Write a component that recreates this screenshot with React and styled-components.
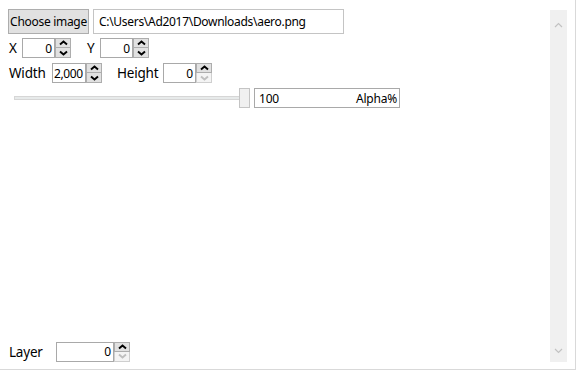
import React from "react";
import styled, { createGlobalStyle } from "styled-components";

const Global = createGlobalStyle`
  html, body { margin: 0; padding: 0; background: #fff; }
  body { font-family: "Noto Sans", "Open Sans", sans-serif; color: #000; }
`;

const Frame = styled.div`
  width: 575px;
  height: 369px;
  border-right: 1px solid #d9d9d9;
  border-bottom: 1px solid #d9d9d9;
  display: flex;
  box-sizing: content-box;
`;

const Content = styled.div`
  flex: 1;
  display: flex;
  flex-direction: column;
  padding: 9px 0 8px 8px;
`;

const Row = styled.div`
  display: flex;
  align-items: center;
  height: ${(p) => p.h || 20}px;
  margin-top: ${(p) => p.mt || 0}px;
`;

const Button = styled.div`
  box-sizing: border-box;
  width: 81px;
  height: 25px;
  background: #e1e1e1;
  border: 1px solid #adadad;
  font-size: 12px;
  display: flex;
  align-items: center;
  justify-content: center;
  letter-spacing: -0.3px;
`;

const PathBox = styled.div`
  box-sizing: border-box;
  width: 251px;
  height: 25px;
  margin-left: 4px;
  border: 1px solid #c4c4c4;
  font-size: 12px;
  display: flex;
  align-items: center;
  padding-left: 5px;
  letter-spacing: -0.3px;
`;

const Label = styled.span`
  font-size: 13.5px;
  width: ${(p) => p.w}px;
  padding-left: 1px;
  box-sizing: border-box;
  letter-spacing: -0.2px;
`;

const NumWrap = styled.div`
  display: flex;
  height: 20px;
`;

const NumBox = styled.div`
  box-sizing: border-box;
  width: ${(p) => p.w}px;
  height: 20px;
  border: 1px solid #a9a9a9;
  font-size: 12px;
  display: flex;
  align-items: center;
  justify-content: flex-end;
  padding-right: 2px;
  overflow: hidden;
  white-space: nowrap;
  ${(p) => p.left && "justify-content: flex-start; padding-left: 1px; letter-spacing: -0.4px;"}
`;

const Spin = styled.div`
  display: flex;
  flex-direction: column;
  width: 16px;
  height: 20px;
`;

const SpinBtn = styled.div`
  box-sizing: border-box;
  height: 10px;
  display: flex;
  align-items: center;
  justify-content: center;
  background: ${(p) => (p.disabled ? "#f4f4f4" : "#e1e1e1")};
  border: 1px solid ${(p) => (p.disabled ? "#cfcfcf" : "#adadad")};
  ${(p) => p.bottom && "border-top: none;"}
`;

const Arrow = ({ down, disabled }) => (
  <svg width="9" height="6" viewBox="0 0 9 6">
    <polyline
      points={down ? "1,1.5 4.5,4.5 8,1.5" : "1,4.5 4.5,1.5 8,4.5"}
      fill="none"
      stroke={disabled ? "#bfbfbf" : "#000"}
      strokeWidth="1.9"
    />
  </svg>
);

const Spinner = ({ value, w, downDisabled, left }) => (
  <NumWrap>
    <NumBox w={w} left={left}>{value}</NumBox>
    <Spin>
      <SpinBtn><Arrow /></SpinBtn>
      <SpinBtn bottom disabled={downDisabled}>
        <Arrow down disabled={downDisabled} />
      </SpinBtn>
    </Spin>
  </NumWrap>
);

const Gap = styled.div`
  width: ${(p) => p.w}px;
  flex-shrink: 0;
`;

const Slider = styled.div`
  position: relative;
  width: 236px;
  height: 20px;
  margin-left: 6px;
  display: flex;
  align-items: center;
`;

const Track = styled.div`
  width: 100%;
  height: 4px;
  box-sizing: border-box;
  background: #e7eaea;
  border: 1px solid #d6d6d6;
`;

const Thumb = styled.div`
  position: absolute;
  right: 0;
  top: 0;
  width: 11px;
  height: 20px;
  box-sizing: border-box;
  background: #f0f0f0;
  border: 1px solid #c4c4c4;
`;

const AlphaBox = styled.div`
  box-sizing: border-box;
  width: 146px;
  height: 20px;
  margin-left: 4px;
  border: 1px solid #a9a9a9;
  font-size: 12px;
  display: flex;
  align-items: center;
  justify-content: space-between;
  padding: 0 2px 0 4px;
  letter-spacing: -0.2px;
`;

const Scroll = styled.div`
  width: 17px;
  margin: 10px 8px 7px 0;
  background: #f0f0f0;
  display: flex;
  flex-direction: column;
  justify-content: space-between;
  align-items: center;
  padding: 12px 0 8px;
  box-sizing: border-box;
`;

const ScrollArrow = ({ down }) => (
  <svg width="9" height="6" viewBox="0 0 9 6">
    <polyline
      points={down ? "1,1 4.5,4.5 8,1" : "1,5 4.5,1.5 8,5"}
      fill="none"
      stroke="#c2c2c2"
      strokeWidth="1.2"
    />
  </svg>
);

export default function App() {
  return (
    <>
      <Global />
      <Frame>
        <Content>
          <Row h={25}>
            <Button>Choose image</Button>
            <PathBox>C:\Users\Ad2017\Downloads\aero.png</PathBox>
          </Row>
          <Row mt={4}>
            <Label w={14}>X</Label>
            <Spinner value="0" w={33} />
            <Gap w={15} />
            <Label w={14}>Y</Label>
            <Spinner value="0" w={33} />
          </Row>
          <Row mt={5}>
            <Label w={44}>Width</Label>
            <Spinner value="2,000" w={34} left />
            <Gap w={14} />
            <Label w={47}>Height</Label>
            <Spinner value="0" w={33} downDisabled />
          </Row>
          <Row mt={5}>
            <Slider>
              <Track />
              <Thumb />
            </Slider>
            <AlphaBox>
              <span>100</span>
              <span>Alpha%</span>
            </AlphaBox>
          </Row>
          <Row style={{ marginTop: "auto" }} h={19}>
            <Label w={48}>Layer</Label>
            <Spinner value="0" w={58} downDisabled />
          </Row>
        </Content>
        <Scroll>
          <ScrollArrow />
          <ScrollArrow down />
        </Scroll>
      </Frame>
    </>
  );
}
